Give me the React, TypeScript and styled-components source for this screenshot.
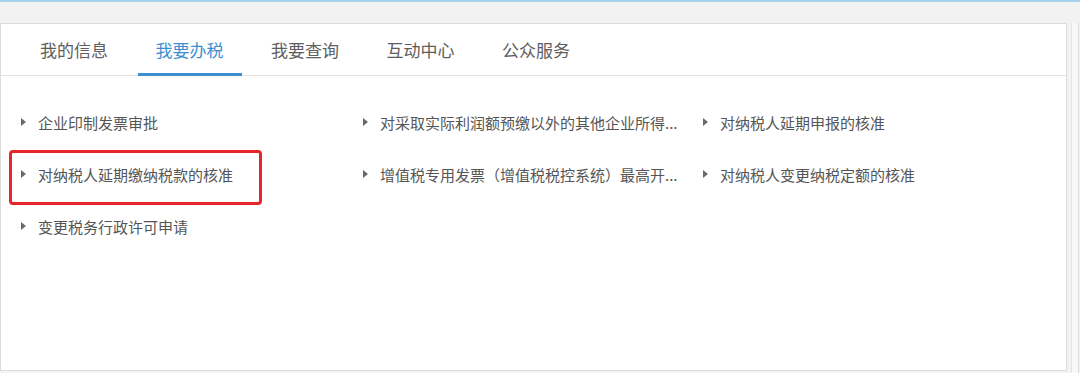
import React from "react";
import styled, { createGlobalStyle } from "styled-components";

const GlobalStyle = createGlobalStyle`
  html, body {
    margin: 0;
    padding: 0;
    background: #f2f2f2;
    font-family: "Noto Sans CJK SC", "Noto Sans", sans-serif;
  }
`;

const tabs = ["我的信息", "我要办税", "我要查询", "互动中心", "公众服务"];

const items = [
  { text: "企业印制发票审批" },
  { text: "对采取实际利润额预缴以外的其他企业所得..." },
  { text: "对纳税人延期申报的核准" },
  { text: "对纳税人延期缴纳税款的核准", marked: true },
  { text: "增值税专用发票（增值税税控系统）最高开..." },
  { text: "对纳税人变更纳税定额的核准" },
  { text: "变更税务行政许可申请" },
];

export default function App() {
  return (
    <>
      <GlobalStyle />
      <Page>
        <TopLine />
        <Body>
          <Panel>
            <TabBar>
              {tabs.map((t, i) => (
                <Tab key={t} active={i === 1}>
                  {t}
                </Tab>
              ))}
            </TabBar>
            <ItemGrid>
              {items.map((it) => (
                <Item key={it.text} marked={!!it.marked}>
                  <Arrow />
                  <Label>{it.text}</Label>
                </Item>
              ))}
            </ItemGrid>
          </Panel>
          <ScrollStrip>
            <ScrollTrack />
          </ScrollStrip>
        </Body>
      </Page>
    </>
  );
}

const Page = styled.div`
  width: 1080px;
  height: 373px;
  overflow: hidden;
  display: flex;
  flex-direction: column;
`;

const TopLine = styled.div`
  height: 2px;
  background: #a6d2ee;
  flex-shrink: 0;
`;

const Body = styled.div`
  flex: 1;
  display: flex;
  padding-top: 21px;
`;

const Panel = styled.div`
  width: 1067px;
  height: 348px;
  background: #fff;
  border: 1px solid #dcdcdc;
  box-sizing: border-box;
  display: flex;
  flex-direction: column;
`;

const TabBar = styled.div`
  height: 52px;
  display: flex;
  gap: 11.5px;
  padding-left: 21px;
  border-bottom: 1px solid #e3e3e3;
  box-sizing: border-box;
`;

const Tab = styled.div<{ active: boolean }>`
  width: 104px;
  height: 52px;
  margin-bottom: -1px;
  box-sizing: border-box;
  display: flex;
  align-items: center;
  justify-content: center;
  padding-top: 1px;
  font-size: 17px;
  color: ${(p) => (p.active ? "#3a8fd2" : "#5e5e5e")};
  border-bottom: 3px solid ${(p) => (p.active ? "#3a8fd2" : "transparent")};
`;

const ItemGrid = styled.div`
  display: grid;
  grid-template-columns: 342px 340px 1fr;
  grid-auto-rows: 52px;
  padding: 20px 0 0 20px;
`;

const Item = styled.div<{ marked: boolean }>`
  position: relative;
  display: flex;
  align-items: center;
  gap: 12px;
  min-width: 0;

  ${(p) =>
    p.marked &&
    `
    &::after {
      content: "";
      position: absolute;
      left: -12px;
      top: 2px;
      width: 253px;
      bottom: -5px;
      border: 3px solid #e5262b;
      border-radius: 4px;
      box-sizing: border-box;
    }
  `}
`;

const Arrow = styled.span`
  width: 0;
  height: 0;
  flex-shrink: 0;
  border-top: 4px solid transparent;
  border-bottom: 4px solid transparent;
  border-left: 5px solid #6a6a6a;
`;

const Label = styled.span`
  font-size: 15px;
  color: #555;
  white-space: nowrap;
`;

const ScrollStrip = styled.div`
  width: 13px;
  height: 350px;
  display: flex;
  justify-content: center;
  padding-left: 2px;
  box-sizing: border-box;
`;

const ScrollTrack = styled.div`
  width: 6px;
  height: 100%;
  background: #f8f8f8;
  border-left: 1px solid #e4e4e4;
  border-right: 1px solid #dedede;
`;
